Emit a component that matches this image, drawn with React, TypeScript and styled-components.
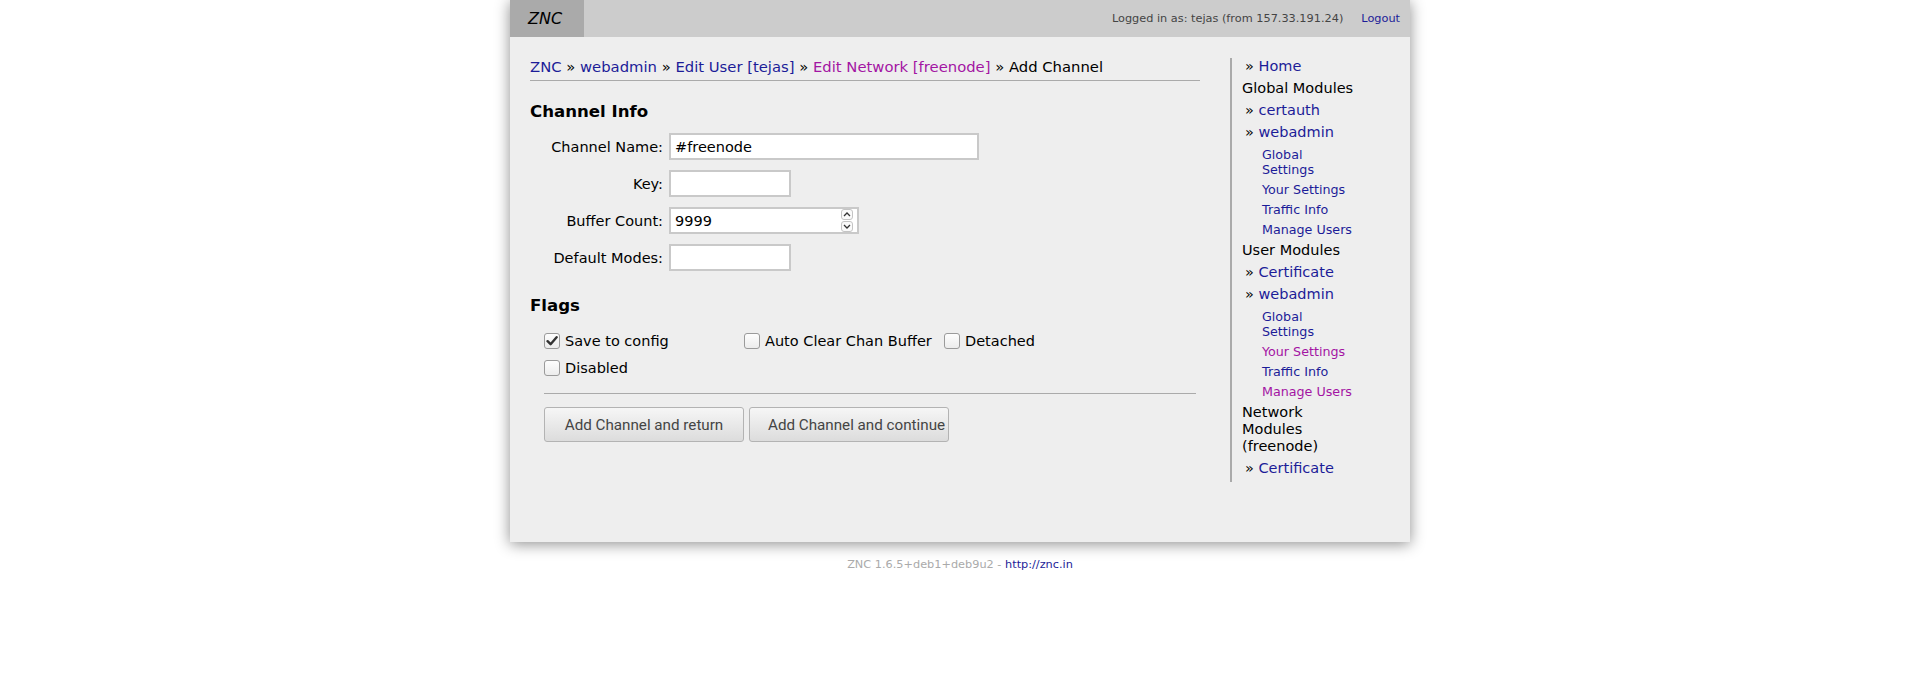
import React from "react";
import styled, { createGlobalStyle } from "styled-components";

const Global = createGlobalStyle`
  html, body { margin: 0; padding: 0; background: #fff; }
  body { font-family: "DejaVu Sans", "Liberation Sans", sans-serif; color: #000; }
  * { box-sizing: border-box; }
  ul { list-style: none; margin: 0; padding: 0; }
`;

const LINK = "#1c1c98";
const VISITED = "#a314a3";

const Frame = styled.div`
  width: 900px;
  margin: 0 auto;
  background: #eee;
  box-shadow: 0 2px 14px rgba(0, 0, 0, 0.45);
`;

const TopBar = styled.div`
  height: 37px;
  background: #ccc;
  display: flex;
  align-items: center;
  font-size: 11.3px;
  color: #444;
`;

const Logo = styled.div`
  width: 74px;
  height: 100%;
  background: #aaa;
  display: flex;
  align-items: center;
  padding-left: 18px;
  font-style: italic;
  font-size: 16px;
  color: #000;
`;

const UserInfo = styled.span`
  margin-left: auto;
`;

const TopLink = styled.a`
  color: ${LINK};
  text-decoration: none;
  margin: 0 10px 0 18px;
`;

const Body = styled.div`
  display: grid;
  grid-template-columns: 670px 1fr;
  column-gap: 30px;
  padding: 21px 53px 60px 20px;
  align-items: start;
`;

const Main = styled.div`
  font-size: 14.5px;
`;

const Link = styled.a<{ $visited?: boolean }>`
  color: ${(p) => (p.$visited ? VISITED : LINK)};
  text-decoration: none;
`;

const Breadcrumb = styled.div`
  font-size: 14.8px;
  line-height: 17px;
  padding-bottom: 5px;
  border-bottom: 1px solid #aaa;
`;

const Sep = styled.span`
  margin: 0 4.7px;
`;

const SectionTitle = styled.h2<{ $top: number }>`
  margin: ${(p) => p.$top}px 0 0;
  font-size: 16.6px;
  line-height: 20px;
  font-weight: bold;
`;

const FormGrid = styled.div`
  margin-top: 11px;
  display: grid;
  grid-template-columns: 133px auto;
  column-gap: 6px;
  row-gap: 10px;
  align-items: center;
  justify-items: start;
`;

const Label = styled.label`
  justify-self: end;
`;

const Field = styled.input<{ $w: number }>`
  width: ${(p) => p.$w}px;
  height: 27px;
  border: 2px solid #c9c9c9;
  background: #fff;
  padding: 0 4px;
  font: inherit;
  color: #000;
  outline: none;
`;

const NumberBox = styled.div`
  width: 190px;
  height: 27px;
  border: 2px solid #c9c9c9;
  background: #fff;
  display: flex;
  align-items: stretch;
  padding-right: 4px;
`;

const NumberInput = styled.input`
  flex: 1;
  min-width: 0;
  border: 0;
  padding: 0 4px;
  font: inherit;
  color: #000;
  outline: none;
  background: transparent;
`;

const SpinColumn = styled.div`
  width: 12px;
  display: flex;
  flex-direction: column;
  justify-content: center;
  gap: 1px;
`;

const SpinButton = styled.span`
  height: 11px;
  border: 1px solid #c4c4c4;
  border-radius: 3px;
  background: #fafafa;
  display: flex;
  align-items: center;
  justify-content: center;
`;

const FlagsArea = styled.div`
  margin-top: 11px;
  padding-left: 14px;
  padding-right: 4px;
`;

const Flags = styled.div`
  display: flex;
  flex-wrap: wrap;
`;

const Flag = styled.label`
  width: 200px;
  height: 27px;
  display: flex;
  align-items: center;
  gap: 5px;
`;

const Box = styled.span`
  width: 16px;
  height: 16px;
  flex: none;
  border: 1px solid #9a9a9a;
  border-radius: 3px;
  background: linear-gradient(#fdfdfd, #ececec);
  display: flex;
  align-items: center;
  justify-content: center;
`;

const Rule = styled.hr`
  margin: 12px 0 0;
  border: 0;
  border-top: 1px solid #aaa;
`;

const Buttons = styled.div`
  margin-top: 13px;
  display: flex;
  gap: 5px;
`;

const Button = styled.button`
  width: 200px;
  height: 35px;
  border: 1px solid #b3b3b3;
  border-radius: 3px;
  background: linear-gradient(#f6f6f6, #dcdcdc);
  font-family: Roboto, "Liberation Sans", sans-serif;
  font-size: 15.2px;
  color: #444;
  padding: 0 18px;
  display: flex;
  align-items: center;
  justify-content: safe center;
  white-space: nowrap;
  overflow: hidden;
`;

const Sidebar = styled.nav`
  border-left: 2px solid #aaa;
  padding: 0 0 5px 10px;
  font-size: 14.5px;
  line-height: 17px;
`;

const Item = styled.li<{ $link?: boolean }>`
  margin-bottom: 5px;
  padding-left: ${(p) => (p.$link ? 3 : 0)}px;
  &:last-child { margin-bottom: 0; }
`;

const SubList = styled.ul`
  padding-top: 6px;
  padding-left: 17px;
  font-size: 12.7px;
  line-height: 15px;
`;

const SubItem = styled.li`
  margin-bottom: 5px;
`;

const Footer = styled.div`
  text-align: center;
  margin-top: 16px;
  font-size: 11.3px;
  line-height: 14px;
  color: #aaa;
`;

const Check = () => (
  <svg width="12" height="12" viewBox="0 0 12 12">
    <path d="M1.6 6.2 L4.6 9.2 L10.6 2.2" fill="none" stroke="#333" strokeWidth="2.4" strokeLinecap="round" strokeLinejoin="round" />
  </svg>
);

const Chevron = ({ up }: { up?: boolean }) => (
  <svg width="8" height="5" viewBox="0 0 8 5">
    <path d={up ? "M1 4 L4 1 L7 4" : "M1 1 L4 4 L7 1"} fill="none" stroke="#333" strokeWidth="1.3" />
  </svg>
);

type Sub = { label: string; visited?: boolean };
type Entry =
  | { kind: "head"; label: string }
  | { kind: "link"; label: string; subs?: Sub[] };

const entries: Entry[] = [
  { kind: "link", label: "Home" },
  { kind: "head", label: "Global Modules" },
  { kind: "link", label: "certauth" },
  {
    kind: "link",
    label: "webadmin",
    subs: [
      { label: "Global Settings" },
      { label: "Your Settings" },
      { label: "Traffic Info" },
      { label: "Manage Users" },
    ],
  },
  { kind: "head", label: "User Modules" },
  { kind: "link", label: "Certificate" },
  {
    kind: "link",
    label: "webadmin",
    subs: [
      { label: "Global Settings" },
      { label: "Your Settings", visited: true },
      { label: "Traffic Info" },
      { label: "Manage Users", visited: true },
    ],
  },
  { kind: "head", label: "Network Modules (freenode)" },
  { kind: "link", label: "Certificate" },
];

const flags = [
  { label: "Save to config", checked: true },
  { label: "Auto Clear Chan Buffer" },
  { label: "Detached" },
  { label: "Disabled" },
];

export default function App() {
  return (
    <>
      <Global />
      <Frame>
        <TopBar>
          <Logo>ZNC</Logo>
          <UserInfo>Logged in as: tejas (from 157.33.191.24)</UserInfo>
          <TopLink href="#">Logout</TopLink>
        </TopBar>
        <Body>
          <Main>
            <Breadcrumb>
              <Link href="#">ZNC</Link>
              <Sep>»</Sep>
              <Link href="#">webadmin</Link>
              <Sep>»</Sep>
              <Link href="#">Edit User [tejas]</Link>
              <Sep>»</Sep>
              <Link href="#" $visited>Edit Network [freenode]</Link>
              <Sep>»</Sep>
              Add Channel
            </Breadcrumb>

            <SectionTitle $top={21}>Channel Info</SectionTitle>
            <FormGrid>
              <Label>Channel Name:</Label>
              <Field $w={310} defaultValue="#freenode" />
              <Label>Key:</Label>
              <Field $w={122} />
              <Label>Buffer Count:</Label>
              <NumberBox>
                <NumberInput defaultValue="9999" />
                <SpinColumn>
                  <SpinButton><Chevron up /></SpinButton>
                  <SpinButton><Chevron /></SpinButton>
                </SpinColumn>
              </NumberBox>
              <Label>Default Modes:</Label>
              <Field $w={122} />
            </FormGrid>

            <SectionTitle $top={25}>Flags</SectionTitle>
            <FlagsArea>
              <Flags>
                {flags.map((f) => (
                  <Flag key={f.label}>
                    <Box>{f.checked && <Check />}</Box>
                    {f.label}
                  </Flag>
                ))}
              </Flags>
              <Rule />
              <Buttons>
                <Button>Add Channel and return</Button>
                <Button>Add Channel and continue</Button>
              </Buttons>
            </FlagsArea>
          </Main>

          <Sidebar>
            <ul>
              {entries.map((e, i) =>
                e.kind === "head" ? (
                  <Item key={i}>{e.label}</Item>
                ) : (
                  <Item key={i} $link>
                    » <Link href="#">{e.label}</Link>
                    {e.subs && (
                      <SubList>
                        {e.subs.map((s, j) => (
                          <SubItem key={j}>
                            <Link href="#" $visited={s.visited}>{s.label}</Link>
                          </SubItem>
                        ))}
                      </SubList>
                    )}
                  </Item>
                )
              )}
            </ul>
          </Sidebar>
        </Body>
      </Frame>
      <Footer>
        ZNC 1.6.5+deb1+deb9u2 - <Link href="#">http://znc.in</Link>
      </Footer>
    </>
  );
}
